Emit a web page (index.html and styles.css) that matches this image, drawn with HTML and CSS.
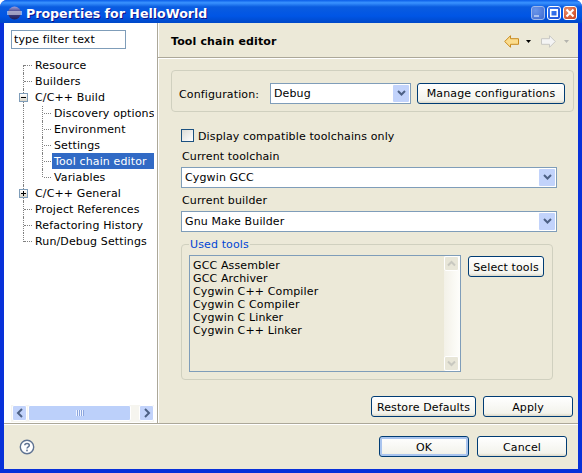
FILE: index.html
```html
<!DOCTYPE html>
<html lang="en">

<head>
  <meta charset="UTF-8">
  <title>Properties for HelloWorld</title>
  <link rel="stylesheet" href="styles.css">
</head>

<body>
  <div class="window">
    <div class="titlebar">
      <svg class="app-icon" width="15" height="14" viewBox="0 0 15 14">
        <defs>
          <linearGradient id="ball" x1="0" y1="0" x2="0" y2="1">
            <stop offset="0" stop-color="#a0a0d8" />
            <stop offset="0.4" stop-color="#46468f" />
            <stop offset="1" stop-color="#20205a" />
          </linearGradient>
        </defs>
        <circle cx="7.500" cy="7" r="6.500" fill="url(#ball)" />
        <rect x="0" y="5.500" width="15" height="1" fill="#fff" />
        <rect x="0" y="7.500" width="15" height="1" fill="#fff" />
      </svg>
      <span class="title">Properties for HelloWorld</span>
      <div class="win-buttons">
        <span class="win-btn">
          <svg width="12" height="12" viewBox="0 0 12 12"><rect x="2" y="8" width="5" height="2" fill="#a8c0f0" /></svg>
        </span>
        <span class="win-btn">
          <svg width="12" height="12" viewBox="0 0 12 12"><path d="M2 2h8v8H2z M3.500 4v4.500h5V4z" fill="#fff" fill-rule="evenodd" /></svg>
        </span>
        <span class="win-btn close">
          <svg width="12" height="12" viewBox="0 0 12 12"><path d="M2.500 2.500l7 7M9.500 2.500l-7 7" stroke="#fff" stroke-width="2" /></svg>
        </span>
      </div>
    </div>

    <div class="content">
      <div class="panes">
        <div class="sidebar">
          <input class="filter" type="text" value="type filter text">
          <ul class="tree">
            <li class="first"><span class="leaf">Resource</span></li>
            <li><span class="leaf">Builders</span></li>
            <li class="parent">
              <span class="toggle">
                <svg width="7" height="7" viewBox="0 0 7 7"><rect x="1" y="3" width="5" height="1" fill="#000" /></svg>
              </span>
              <span class="leaf">C/C++ Build</span>
            </li>
            <li class="child first-child"><span class="leaf">Discovery options</span></li>
            <li class="child"><span class="leaf">Environment</span></li>
            <li class="child"><span class="leaf">Settings</span></li>
            <li class="child"><span class="leaf selected">Tool chain editor</span></li>
            <li class="child last-child"><span class="leaf">Variables</span></li>
            <li class="parent">
              <span class="toggle">
                <svg width="7" height="7" viewBox="0 0 7 7"><path d="M1 3h5v1H1z M3 1h1v5H3z" fill="#000" /></svg>
              </span>
              <span class="leaf">C/C++ General</span>
            </li>
            <li><span class="leaf">Project References</span></li>
            <li><span class="leaf">Refactoring History</span></li>
            <li class="last"><span class="leaf">Run/Debug Settings</span></li>
          </ul>
          <div class="hscroll">
            <span class="sb-btn">
              <svg width="8" height="10" viewBox="0 0 8 10"><path d="M6 1L2 5l4 4" fill="none" stroke="#4d6185" stroke-width="2" /></svg>
            </span>
            <span class="sb-thumb"><span class="grip"></span></span>
            <span class="sb-btn sb-right">
              <svg width="8" height="10" viewBox="0 0 8 10"><path d="M2 1l4 4-4 4" fill="none" stroke="#4d6185" stroke-width="2" /></svg>
            </span>
          </div>
        </div>

        <div class="main">
          <div class="page-header">
            <h1>Tool chain editor</h1>
            <div class="nav-icons">
              <svg width="15" height="13" viewBox="0 0 15 13"><path d="M.7 6.500L6.500.7v3h8v5.600h-8v3z" fill="#fbdc8c" stroke="#c98a1e" /></svg>
              <svg class="caret" width="5" height="3" viewBox="0 0 5 3"><path d="M0 0h5L2.500 3z" fill="#000" /></svg>
              <svg class="forward" width="15" height="13" viewBox="0 0 15 13"><path d="M14.300 6.500L8.500.7v3h-8v5.600h8v3z" fill="#f4f4f4" stroke="#c8c8c4" /></svg>
              <svg class="caret last-caret" width="5" height="3" viewBox="0 0 5 3"><path d="M0 0h5L2.500 3z" fill="#b4b4ae" /></svg>
            </div>
          </div>

          <div class="page-body">
            <div class="config-box">
              <span class="config-label">Configuration:</span>
              <div class="combo config-combo">
                <span>Debug</span>
                <span class="combo-btn">
                  <svg width="9" height="7" viewBox="0 0 9 7"><path d="M1 1l3.500 3.500L8 1" fill="none" stroke="#4d6185" stroke-width="2" /></svg>
                </span>
              </div>
              <button class="btn manage">Manage configurations</button>
            </div>

            <div class="settings">
              <label class="check"><span class="checkbox"></span>Display compatible toolchains only</label>
              <div class="field-label">Current toolchain</div>
              <div class="combo wide">
                <span>Cygwin GCC</span>
                <span class="combo-btn">
                  <svg width="9" height="7" viewBox="0 0 9 7"><path d="M1 1l3.500 3.500L8 1" fill="none" stroke="#4d6185" stroke-width="2" /></svg>
                </span>
              </div>
              <div class="field-label next-label">Current builder</div>
              <div class="combo wide">
                <span>Gnu Make Builder</span>
                <span class="combo-btn">
                  <svg width="9" height="7" viewBox="0 0 9 7"><path d="M1 1l3.500 3.500L8 1" fill="none" stroke="#4d6185" stroke-width="2" /></svg>
                </span>
              </div>

              <fieldset class="used-tools">
                <legend>Used tools</legend>
                <div class="tools-list">
                  <ul>
                    <li>GCC Assembler</li>
                    <li>GCC Archiver</li>
                    <li>Cygwin C++ Compiler</li>
                    <li>Cygwin C Compiler</li>
                    <li>Cygwin C Linker</li>
                    <li>Cygwin C++ Linker</li>
                  </ul>
                  <div class="vscroll">
                    <span class="vs-btn">
                      <svg width="9" height="7" viewBox="0 0 9 7"><path d="M1 5.500L4.500 2 8 5.500" fill="none" stroke="#c8c8c0" stroke-width="2" /></svg>
                    </span>
                    <span class="vs-btn">
                      <svg width="9" height="7" viewBox="0 0 9 7"><path d="M1 1.500L4.500 5 8 1.500" fill="none" stroke="#c8c8c0" stroke-width="2" /></svg>
                    </span>
                  </div>
                </div>
                <button class="btn select-tools">Select tools</button>
              </fieldset>
            </div>

            <div class="page-actions">
              <button class="btn restore">Restore Defaults</button>
              <button class="btn apply">Apply</button>
            </div>
          </div>
        </div>
      </div>

      <div class="footer">
        <svg class="help" width="16" height="16" viewBox="0 0 16 16">
          <circle cx="8" cy="8" r="6.700" fill="#fff" stroke="#5f7392" stroke-width="1.400" />
          <path d="M5.800 6.200C5.800 3.800 10.300 3.800 10.300 6.200 10.300 7.900 8 7.700 8 9.600" fill="none" stroke="#5f7392" stroke-width="1.500" />
          <rect x="7.200" y="10.600" width="1.600" height="1.700" fill="#5f7392" />
        </svg>
        <button class="btn ok">OK</button>
        <button class="btn cancel">Cancel</button>
      </div>
    </div>
  </div>
</body>

</html>
```

FILE: styles.css
```css
* {
  box-sizing: border-box;
}

body {
  margin: 0;
  font-family: "DejaVu Sans", "Liberation Sans", sans-serif;
  font-size: 11px;
  letter-spacing: 0.13px;
  color: #000;
}

ul {
  list-style: none;
  margin: 0;
  padding: 0;
}

.window {
  width: 582px;
  height: 473px;
  display: flex;
  flex-direction: column;
  background-color: #0831d9;
  border-radius: 7px 7px 0 0;
  overflow: hidden;
}

.titlebar {
  height: 23px;
  flex: none;
  display: flex;
  align-items: center;
  padding: 3px 5px 0 7px;
  background: linear-gradient(#0a5de8 0%, #3a93ff 12%, #0a5ce0 30%, #0055e5 70%, #0048c8 100%);
}

.app-icon {
  flex: none;
}

.title {
  margin-left: 4px;
  color: #fff;
  font-size: 12.600px;
  font-weight: bold;
  letter-spacing: 0;
  text-shadow: 1px 1px 0 #0f1089;
}

.win-buttons {
  margin-left: auto;
  display: flex;
  gap: 2px;
}

.win-btn {
  width: 14px;
  height: 14px;
  border: 1px solid #fff;
  border-radius: 3px;
  background: radial-gradient(circle at 30% 30%, #3c7cf0, #1c50d8);
  display: flex;
  align-items: center;
  justify-content: center;
}

.win-btn:first-child {
  background: radial-gradient(circle at 30% 30%, #6a96ea, #3f6ad0);
  border-color: #9fb8ea;
}

.win-btn.close {
  background: radial-gradient(circle at 30% 30%, #e8906c, #c83c18);
}

.content {
  flex: 1;
  margin: 0 4px 4px;
  display: flex;
  flex-direction: column;
  background-color: #ece9d8;
}

.panes {
  height: 401px;
  flex: none;
  display: flex;
  border-bottom: 1px solid #aca899;
  box-shadow: 0 1px 0 #fff;
}

/* left side with filter and tree */
.sidebar {
  width: 154px;
  flex: none;
  padding: 7px 0 0 7px;
  display: flex;
  flex-direction: column;
  background-color: #fff;
  border-right: 1px solid #aca899;
  box-shadow: 1px 0 0 #fff;
}

.filter {
  width: 115px;
  height: 19px;
  padding: 0 0 0 2px;
  border: 1px solid #7f9db9;
  outline: none;
  font: inherit;
  letter-spacing: inherit;
  color: #000;
}

.tree {
  margin-top: 8px;
  flex: 1;
  overflow: hidden;
}

.tree li {
  height: 16px;
  line-height: 18px;
  padding-left: 22px;
  position: relative;
  white-space: nowrap;
  overflow: hidden;
  width: 143px;
}

.tree .child {
  padding-left: 41px;
}

/* dotted connector lines of the tree */
.tree li::before {
  content: "";
  position: absolute;
  left: 12px;
  top: 0;
  bottom: 0;
  border-left: 1px dotted #808080;
}

.tree li.first::before {
  top: 8px;
}

.tree li.last::before {
  bottom: 7px;
}

.tree li::after {
  content: "";
  position: absolute;
  left: 13px;
  top: 8px;
  width: 8px;
  border-top: 1px dotted #808080;
}

.tree .child::after {
  left: 33px;
  width: 7px;
}

.tree li.parent::after {
  display: none;
}

.leaf {
  position: relative;
  display: inline-block;
  height: 16px;
  padding: 0 2px;
}

.child .leaf::before {
  content: "";
  position: absolute;
  left: -10px;
  top: 0;
  bottom: 0;
  border-left: 1px dotted #808080;
}

.last-child .leaf::before {
  bottom: 8px;
}

.first-child .leaf::before {
  top: -8px;
}

.leaf.selected {
  background-color: #316ac5;
  color: #fff;
  width: 102px;
}

.toggle {
  position: absolute;
  z-index: 1;
  left: 8px;
  top: 4px;
  width: 9px;
  height: 9px;
  border: 1px solid #7f9db9;
  background: linear-gradient(#fff, #d8d4c8);
  display: flex;
}

.hscroll {
  height: 17px;
  width: 143px;
  margin-bottom: 1px;
  padding-left: 1px;
  display: flex;
  background-color: #f6f5ef;
}

.sb-btn {
  width: 15px;
  height: 16px;
  border: 1px solid #fff;
  border-radius: 2px;
  background-color: #c2d3fb;
  display: flex;
  align-items: center;
  justify-content: center;
}

.sb-right {
  margin-left: auto;
}

.sb-thumb {
  width: 103px;
  height: 16px;
  margin-left: 1px;
  border: 1px solid #fff;
  border-radius: 2px;
  background-color: #bcd0fa;
  display: flex;
  align-items: center;
  justify-content: center;
}

.grip {
  width: 8px;
  height: 6px;
  background: repeating-linear-gradient(90deg, #eef3ff 0 1px, #8ca6de 1px 2px);
}

.main {
  flex: 1;
  display: flex;
  flex-direction: column;
}

.page-header {
  height: 35px;
  flex: none;
  display: flex;
  align-items: center;
  justify-content: space-between;
  padding: 3px 9px 0 13px;
  border-bottom: 1px solid #aca899;
  box-shadow: 0 1px 0 #fff;
}

.page-header h1 {
  margin: 0;
  font-size: 11px;
  font-weight: bold;
}

.nav-icons {
  display: flex;
  align-items: center;
}

.caret {
  margin-left: 7px;
}

.last-caret {
  margin-left: 8px;
}

.forward {
  margin-left: 10px;
}

.page-body {
  flex: 1;
  padding: 12px 0 0 13px;
}

.config-box {
  width: 403px;
  height: 42px;
  display: flex;
  align-items: center;
  padding: 4px 0 0 7px;
  border: 1px solid #d0d0bf;
  border-radius: 4px;
}

.config-label {
  width: 91px;
  padding-top: 3px;
}

.combo {
  height: 21px;
  display: flex;
  align-items: center;
  justify-content: space-between;
  padding: 0 1px 0 3px;
  background-color: #fff;
  border: 1px solid #7f9db9;
}

.combo-btn {
  width: 16px;
  height: 17px;
  border-radius: 1px;
  background-color: #c2d3fb;
  display: flex;
  align-items: center;
  justify-content: center;
}

.config-combo {
  width: 141px;
}

.btn {
  height: 21px;
  padding: 1px 0 0;
  border: 1px solid #003c74;
  border-radius: 3px;
  background: linear-gradient(#fff, #f3f3ec 85%, #dcd8c8);
  font: inherit;
  letter-spacing: inherit;
  color: #000;
}

.manage {
  width: 148px;
  margin-left: 6px;
}

.settings {
  padding-left: 10px;
  margin-top: 17px;
}

.check {
  display: flex;
  align-items: center;
  height: 14px;
  padding-top: 1px;
}

.checkbox {
  width: 13px;
  height: 13px;
  margin-top: -2px;
  margin-right: 4px;
  border: 1px solid #1c5180;
  background: linear-gradient(135deg, #dcdcd7, #fff);
}

.field-label {
  height: 16px;
  line-height: 18px;
  padding-left: 1px;
  margin-top: 5px;
}

.next-label {
  margin-top: 4px;
}

.wide {
  width: 376px;
  margin-top: 3px;
}

.used-tools {
  width: 372px;
  height: 142px;
  margin: 6px 0 0;
  padding: 0 0 0 7px;
  display: flex;
  gap: 7px;
  border: 1px solid #d0d0bf;
  border-radius: 4px;
}

.used-tools legend {
  padding: 0 1px;
  color: #0046d5;
  line-height: 13px;
}

.tools-list {
  width: 272px;
  height: 117px;
  flex: none;
  display: flex;
  justify-content: space-between;
  margin-top: 4px;
  border: 1px solid #7f9db9;
}

.tools-list ul {
  padding: 3px 0 0 3px;
}

.tools-list li {
  height: 13px;
  line-height: 13px;
}

.vscroll {
  width: 16px;
  display: flex;
  flex-direction: column;
  justify-content: space-between;
  background: linear-gradient(90deg, #f3f1e8, #fefefb);
}

.vs-btn {
  width: 15px;
  height: 15px;
  border: 1px solid #fff;
  border-radius: 2px;
  background-color: #e8e6d8;
  display: flex;
  align-items: center;
  justify-content: center;
}

.select-tools {
  width: 76px;
  margin-top: 5px;
}

.page-actions {
  display: flex;
  gap: 7px;
  margin-top: 16px;
  padding-left: 200px;
}

.restore {
  width: 105px;
}

.apply {
  width: 90px;
}

.footer {
  flex: 1;
  display: flex;
  align-items: center;
  padding: 0 0 0 15px;
}

.help {
  margin-right: 344px;
}

.ok {
  width: 90px;
  box-shadow: inset 0 0 0 2px #a9c4ee;
}

.cancel {
  width: 90px;
  margin-left: 8px;
}
```
